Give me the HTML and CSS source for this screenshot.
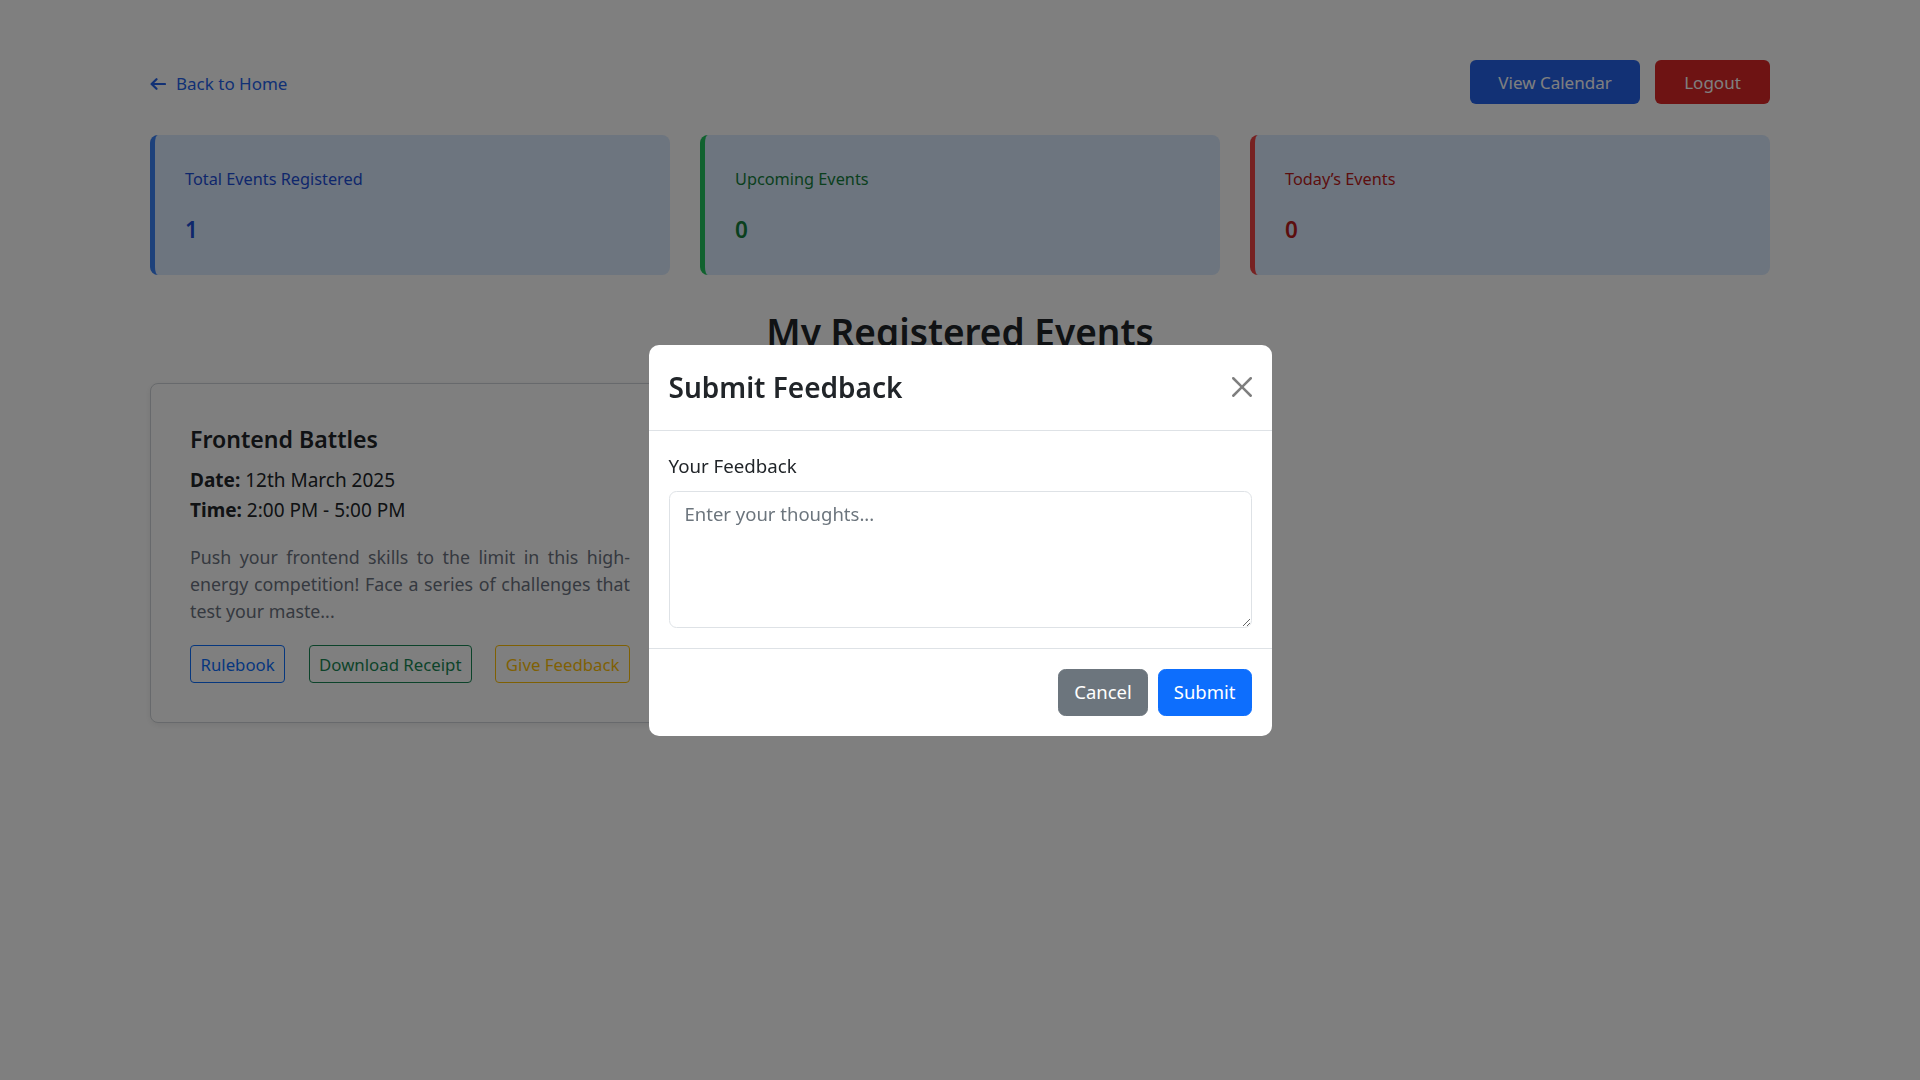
FILE: index.html
```html
<!DOCTYPE html>
<html lang="en">
<head>
<meta charset="utf-8">
<title>My Registered Events</title>
<link rel="stylesheet" href="styles.css">
</head>
<body>
<div class="page">
  <header class="topbar">
    <a class="back-link" href="#">
      <svg class="back-icon" viewBox="0 0 16 12" width="16" height="12" aria-hidden="true">
        <path d="M15 6H1.8M6.5 1.2L1.6 6l4.9 4.8" fill="none" stroke="currentColor" stroke-width="2.2" stroke-linecap="round" stroke-linejoin="round"/>
      </svg>
      <span>Back to Home</span>
    </a>
    <div class="top-actions">
      <button class="btn-top btn-top-blue">View Calendar</button>
      <button class="btn-top btn-top-red">Logout</button>
    </div>
  </header>

  <section class="stats">
    <div class="stat-card stat-blue">
      <div class="stat-label">Total Events Registered</div>
      <div class="stat-value">1</div>
    </div>
    <div class="stat-card stat-green">
      <div class="stat-label">Upcoming Events</div>
      <div class="stat-value">0</div>
    </div>
    <div class="stat-card stat-red">
      <div class="stat-label">Today’s Events</div>
      <div class="stat-value">0</div>
    </div>
  </section>

  <h2 class="section-title">My Registered Events</h2>

  <section class="events">
    <article class="event-card">
      <h4 class="event-title">Frontend Battles</h4>
      <p class="event-meta"><strong>Date:</strong> 12th March 2025</p>
      <p class="event-meta"><strong>Time:</strong> 2:00 PM - 5:00 PM</p>
      <p class="event-desc">Push your frontend skills to the limit in this high-energy competition! Face a series of challenges that test your maste...</p>
      <div class="event-actions">
        <button class="btn-outline btn-outline-blue">Rulebook</button>
        <button class="btn-outline btn-outline-green">Download Receipt</button>
        <button class="btn-outline btn-outline-amber">Give Feedback</button>
      </div>
    </article>
  </section>
</div>

<div class="backdrop">
  <div class="modal" role="dialog" aria-labelledby="fb-title">
    <div class="modal-header">
      <h3 class="modal-title" id="fb-title">Submit Feedback</h3>
      <button class="btn-close" aria-label="Close">
        <svg viewBox="0 0 16 16" width="20" height="20" aria-hidden="true">
          <path d="M.293.293a1 1 0 0 1 1.414 0L8 6.586 14.293.293a1 1 0 1 1 1.414 1.414L9.414 8l6.293 6.293a1 1 0 0 1-1.414 1.414L8 9.414l-6.293 6.293a1 1 0 0 1-1.414-1.414L6.586 8 .293 1.707a1 1 0 0 1 0-1.414z" fill="currentColor"/>
        </svg>
      </button>
    </div>
    <div class="modal-body">
      <label class="form-label" for="fb">Your Feedback</label>
      <textarea class="form-control" id="fb" placeholder="Enter your thoughts..."></textarea>
    </div>
    <div class="modal-footer">
      <button class="btn-modal btn-modal-grey">Cancel</button>
      <button class="btn-modal btn-modal-blue">Submit</button>
    </div>
  </div>
</div>
</body>
</html>
```

FILE: styles.css
```css
* { box-sizing: border-box; }

html, body {
  margin: 0;
  padding: 0;
  background: #ffffff;
}

body {
  font-family: "Noto Sans", "Open Sans", sans-serif;
  color: #212529;
  width: 1920px;
  height: 1080px;
  overflow: hidden;
}

.page {
  padding: 60px 150px 0;
}

/* top bar */
.topbar {
  display: flex;
  align-items: center;
  justify-content: space-between;
  height: 44px;
  margin-bottom: 31px;
}

.back-link {
  display: flex;
  align-items: center;
  gap: 10px;
  padding-top: 3px;
  color: #2563eb;
  text-decoration: none;
  font-size: 17px;
  line-height: 26px;
}

.back-icon { display: block; }

.top-actions {
  display: flex;
  gap: 15px;
}

.btn-top {
  font-family: inherit;
  font-size: 17px;
  height: 44px;
  padding: 0;
  border: none;
  border-radius: 6px;
  color: #ffffff;
  white-space: nowrap;
  cursor: pointer;
}
.btn-top-blue { background: #2563eb; width: 170px; }
.btn-top-red { background: #dc2626; width: 115px; }

/* stats */
.stats {
  display: grid;
  grid-template-columns: repeat(3, 1fr);
  gap: 30px;
}

.stat-card {
  background: #dbeafe;
  border-radius: 8px;
  border-left: 5px solid #3b82f6;
  padding: 31px 30px 0 30px;
  height: 140px;
}
.stat-label {
  font-size: 16.3px;
  line-height: 27px;
  margin-bottom: 22px;
}
.stat-value {
  font-size: 22.5px;
  line-height: 29px;
  font-weight: 600;
}

.stat-blue { border-left-color: #3b82f6; }
.stat-blue .stat-label, .stat-blue .stat-value { color: #1d4ed8; }
.stat-green { border-left-color: #22c55e; }
.stat-green .stat-label, .stat-green .stat-value { color: #15803d; }
.stat-red { border-left-color: #ef4444; }
.stat-red .stat-label, .stat-red .stat-value { color: #b91c1c; }

/* section title */
.section-title {
  margin: 33px 0 27px;
  text-align: center;
  font-size: 37px;
  line-height: 48px;
  font-weight: 600;
  color: #212529;
}

/* events */
.events {
  display: grid;
  grid-template-columns: repeat(3, 1fr);
  gap: 30px;
}

.event-card {
  background: #ffffff;
  border: 1px solid #cfd3d8;
  border-radius: 8px;
  box-shadow: 0 2px 6px rgba(0, 0, 0, 0.08);
  padding: 41px 39px 39px;
}

.event-title {
  margin: 0 0 11px;
  font-size: 23.1px;
  line-height: 29px;
  font-weight: 600;
}

.event-meta {
  margin: 0;
  font-size: 19px;
  line-height: 30px;
}
.event-meta strong { font-weight: 700; }

.event-desc {
  margin: 19px 0 20px;
  font-size: 17.8px;
  line-height: 27px;
  color: #6b7280;
  text-align: justify;
}

.event-actions {
  display: flex;
  justify-content: space-between;
}

.btn-outline {
  font-family: inherit;
  font-size: 16.8px;
  line-height: 27px;
  padding: 4.5px 9.5px;
  background: transparent;
  border: 1px solid;
  border-radius: 4px;
  cursor: pointer;
}
.btn-outline-blue { color: #0d6efd; border-color: #0d6efd; }
.btn-outline-green { color: #198754; border-color: #198754; }
.btn-outline-amber { color: #ffc107; border-color: #ffc107; }

/* modal */
.backdrop {
  position: fixed;
  inset: 0;
  background: rgba(0, 0, 0, 0.5);
  display: flex;
  align-items: center;
  justify-content: center;
}

.modal {
  width: 623px;
  background: #ffffff;
  border-radius: 10px;
  overflow: hidden;
}

.modal-header {
  display: flex;
  align-items: center;
  justify-content: space-between;
  padding: 20px;
  border-bottom: 1px solid #dee2e6;
}

.modal-title {
  margin: 0;
  font-size: 28px;
  line-height: 45px;
  font-weight: 600;
}

.btn-close {
  display: block;
  width: 20px;
  height: 20px;
  padding: 0;
  border: none;
  background: transparent;
  color: #000000;
  opacity: 0.5;
  cursor: pointer;
}
.btn-close svg { display: block; }

.modal-body {
  padding: 20px;
}

.form-label {
  display: block;
  font-size: 18.7px;
  line-height: 30px;
  margin-bottom: 10px;
}

.form-control {
  display: block;
  width: 100%;
  height: 137px;
  padding: 7.5px 15px;
  font-family: inherit;
  font-size: 18.5px;
  line-height: 30px;
  color: #212529;
  border: 1px solid #dee2e6;
  border-radius: 7.5px;
  resize: vertical;
}
.form-control::placeholder { color: #6c757d; }

.modal-footer {
  display: flex;
  justify-content: flex-end;
  gap: 10px;
  padding: 20px;
  border-top: 1px solid #dee2e6;
}

.btn-modal {
  font-family: inherit;
  font-size: 18.5px;
  line-height: 30px;
  padding: 7.5px 15px;
  border: 1px solid transparent;
  border-radius: 7.5px;
  color: #ffffff;
  cursor: pointer;
}
.btn-modal-grey { background: #6c757d; border-color: #6c757d; }
.btn-modal-blue { background: #0d6efd; border-color: #0d6efd; }
```
